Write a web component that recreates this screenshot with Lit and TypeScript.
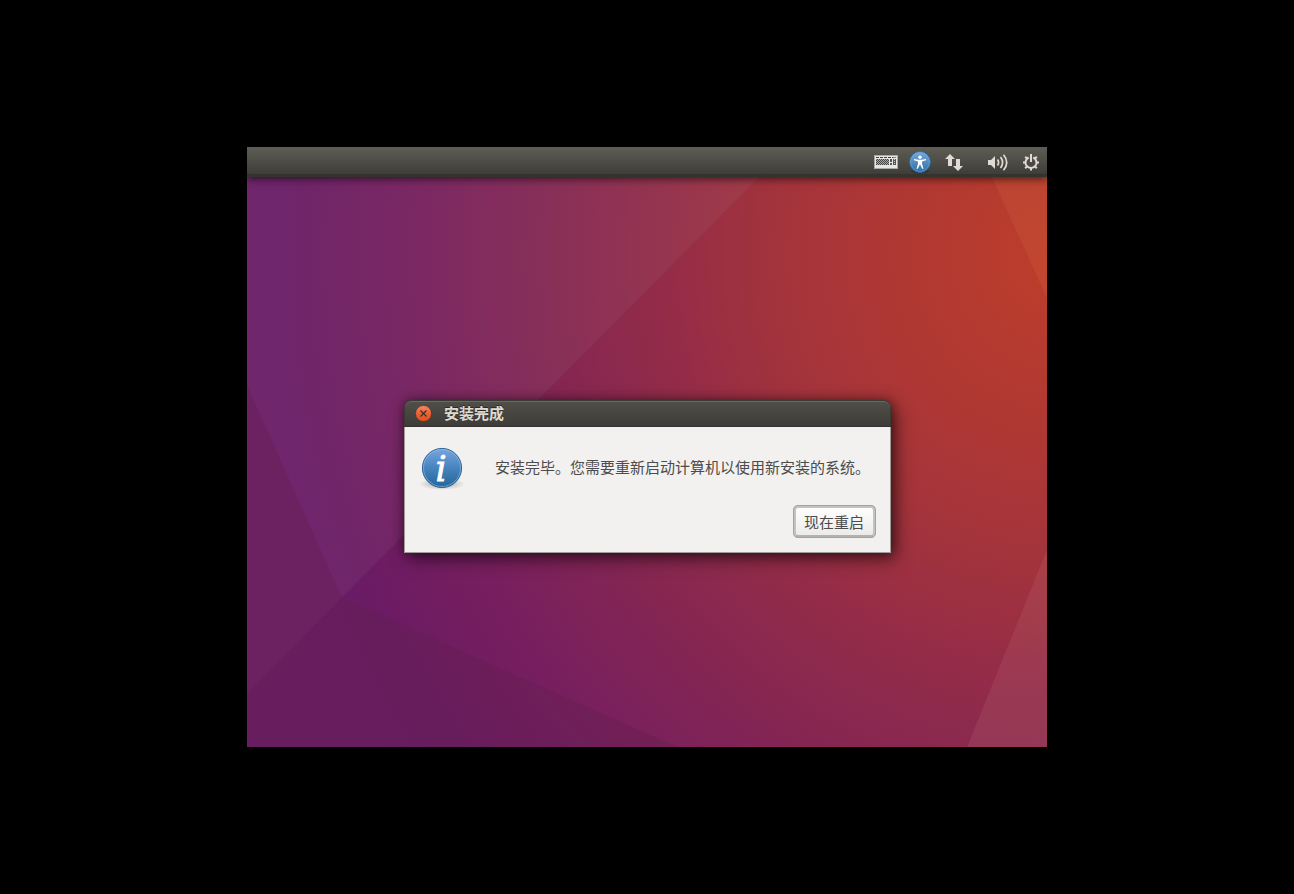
import { LitElement, html, css } from "lit";
import { customElement } from "lit/decorators.js";

const fontStack = css`"Noto Sans CJK SC", "Noto Sans", sans-serif`;

@customElement("desktop-wallpaper")
class DesktopWallpaper extends LitElement {
  static styles = css`
    :host {
      display: block;
    }
    .art {
      display: block;
      width: 100%;
      height: 100%;
    }
  `;

  render() {
    return html`
      <svg class="art" viewBox="0 0 800 600" preserveAspectRatio="none" aria-hidden="true">
        <defs>
          <radialGradient
            id="glow"
            gradientUnits="userSpaceOnUse"
            cx="810"
            cy="100"
            r="810"
            gradientTransform="scale(1 1.080)"
          >
            <stop offset="0" stop-color="#bd3e2a" />
            <stop offset="0.2" stop-color="#b03833" />
            <stop offset="0.36" stop-color="#a2333d" />
            <stop offset="0.46" stop-color="#972d46" />
            <stop offset="0.54" stop-color="#8e2a4c" />
            <stop offset="0.63" stop-color="#852652" />
            <stop offset="0.78" stop-color="#781f5e" />
            <stop offset="0.93" stop-color="#6b1b64" />
            <stop offset="1" stop-color="#6a1c68" />
          </radialGradient>
        </defs>
        <rect width="800" height="600" fill="url(#glow)" />
        <polygon points="0,0 542,0 0,546" fill="#b8a0a0" fill-opacity="0.08" />
        <polygon points="0,238 95,451 0,546" fill="#681c48" fill-opacity="0.3" />
        <polygon points="0,546 95,451 430,600 0,600" fill="#60204c" fill-opacity="0.32" />
        <polygon points="731,0 800,0 800,151" fill="#e08050" fill-opacity="0.14" />
        <polygon points="800,403 800,600 720,600" fill="#d09090" fill-opacity="0.14" />
      </svg>
    `;
  }
}

@customElement("top-panel")
class TopPanel extends LitElement {
  static styles = css`
    :host {
      display: block;
    }
    .bar {
      display: flex;
      align-items: center;
      justify-content: flex-end;
      gap: 10px;
      height: 30px;
      padding: 0 3px 0 8px;
      box-sizing: border-box;
      border-bottom: 3px solid #34342e;
      background: linear-gradient(#5e5d56, #58574f 20%, #3e3d38);
      box-shadow: 0 2px 8px rgba(0, 0, 0, 0.6);
    }
    .indicator {
      display: block;
      padding: 0;
      border: 0;
      background: none;
      color: #dfdbd2;
    }
    .session {
      margin-left: 10px;
    }
    .glyph {
      display: block;
      width: 24px;
      height: 24px;
      margin-top: 3px;
    }
  `;

  render() {
    return html`
      <header class="bar">
        <button class="indicator" aria-label="键盘">
          <svg class="glyph" viewBox="0 0 24 24">
            <defs>
              <pattern id="keys" width="2" height="2" patternUnits="userSpaceOnUse">
                <rect width="2" height="2" fill="#a8a8a4" />
                <rect width="1" height="1" fill="#444" />
                <rect x="1" y="1" width="1" height="1" fill="#444" />
              </pattern>
            </defs>
            <rect x="0.5" y="5.5" width="23" height="13" fill="#e6e6e4" stroke="#a8a8a4" />
            <path d="M2 7.500h20" stroke="#444" stroke-dasharray="3 1" />
            <path d="M19 7.500h3" stroke="#55a83c" />
            <rect x="2" y="9" width="13" height="6" fill="url(#keys)" />
            <path d="M16 9h2v3h-2zM16 13h2v2h-2zM19 9h3v6h-3z" fill="#555" />
            <path d="M20.500 9v6" stroke="#ccc" stroke-dasharray="1 1" />
          </svg>
        </button>
        <button class="indicator" aria-label="辅助功能">
          <svg class="glyph" viewBox="0 0 24 24">
            <defs>
              <linearGradient id="badge" x1="0" y1="0" x2="0" y2="1">
                <stop offset="0" stop-color="#79a9dd" />
                <stop offset="1" stop-color="#2c6ea5" />
              </linearGradient>
            </defs>
            <ellipse cx="12" cy="21" rx="9" ry="2.500" fill="#222" fill-opacity="0.4" />
            <circle cx="12" cy="12" r="10.400" fill="url(#badge)" stroke="#2f6da5" />
            <circle cx="12" cy="12" r="9.400" fill="none" stroke="#8fb8e4" stroke-opacity="0.4" />
            <circle cx="12" cy="7.200" r="1.700" fill="#fff" />
            <path
              d="M6 9l4.500.8h3L18 9v1.200l-4 1.200v2.300l1.500 5h-1.300L12 14.300l-2.200 4.400H8.500l1.500-5v-2.300l-4-1.200z"
              fill="#fff"
            />
          </svg>
        </button>
        <button class="indicator" aria-label="网络">
          <svg class="glyph" viewBox="0 0 24 24" fill="currentColor">
            <path d="M8 4l5 5h-3v7H6V9H3z" />
            <path d="M16 21l-5-5h3V9h4v7h3z" />
          </svg>
        </button>
        <button class="indicator session" aria-label="音量">
          <svg class="glyph" viewBox="0 0 24 24" fill="currentColor">
            <path d="M2 10h3l4-4v13l-4-4H2z" />
            <path
              d="M11.500 9.500q2.200 3 0 6M14.500 7q4.200 5.500 0 11M17.500 4.800q6.500 7.700 0 15.400"
              fill="none"
              stroke="currentColor"
              stroke-width="1.700"
            />
          </svg>
        </button>
        <button class="indicator" aria-label="系统菜单">
          <svg class="glyph" viewBox="0 0 24 24" fill="none" stroke="currentColor">
            <path d="M8.700 7.500a5.500 5.500 0 1 0 4.600 0" stroke-width="2" />
            <path d="M11 4v8" stroke-width="2" />
            <path
              d="M11 18v2.500M3 12.500h2.500M16.500 12.500H19M5.200 6.700l1.900 1.900M16.800 6.700l-1.900 1.900M5.200 18.300l1.900-1.900M16.800 18.300l-1.900-1.900"
              stroke-width="2"
            />
          </svg>
        </button>
      </header>
    `;
  }
}

@customElement("message-dialog")
class MessageDialog extends LitElement {
  static styles = css`
    :host {
      display: block;
      font: 15px/20px ${fontStack};
    }
    .window {
      border-radius: 7px 7px 0 0;
      box-shadow: 4px 5px 18px rgba(0, 0, 0, 0.6), 0 0 10px rgba(0, 0, 0, 0.3);
    }
    .titlebar {
      display: flex;
      align-items: center;
      gap: 12px;
      height: 27px;
      padding: 0 10px 1px;
      box-sizing: border-box;
      border: 1px solid #3a3934;
      border-bottom-color: #33322e;
      border-radius: 7px 7px 0 0;
      background: linear-gradient(#504f49, #3d3c38);
      box-shadow: inset 0 1px #6a6962;
    }
    .title {
      margin: 0;
      color: #dfdbd2;
      font-size: 15px;
      font-weight: 700;
      text-shadow: 0 -1px #2a2926;
    }
    .close {
      padding: 0;
      border: 0;
      background: none;
    }
    .cross {
      display: block;
      width: 17px;
      height: 17px;
    }
    .body {
      display: flex;
      flex-direction: column;
      gap: 13px;
      padding: 17px 14px 14px;
      border: 1px solid #a19d9b;
      border-top: 0;
      background: #f2f1f0;
      color: #4c4c4c;
    }
    .content {
      display: flex;
      align-items: center;
      gap: 28px;
      padding-right: 6px;
    }
    .badge {
      flex: none;
      width: 48px;
      height: 48px;
    }
    .mark {
      font: italic 400 35px "DejaVu Serif", serif;
    }
    .message {
      margin: 0;
      padding-bottom: 2px;
    }
    .actions {
      display: flex;
      justify-content: flex-end;
    }
    .restart {
      height: 33px;
      padding: 0 9px 0 8px;
      border: 3px solid #c3c3c1;
      border-bottom-color: #b2b2af;
      border-radius: 5px;
      outline: 1px solid #a3a3a0;
      outline-offset: -1px;
      background: linear-gradient(#fefefe, #ebebea);
      color: #4c4c4c;
      font: inherit;
    }
  `;

  render() {
    return html`
      <section class="window" role="dialog" aria-labelledby="title" aria-describedby="message">
        <header class="titlebar">
          <button class="close" aria-label="关闭">
            <svg class="cross" viewBox="0 0 17 17">
              <defs>
                <linearGradient id="ember" x1="0" y1="0" x2="0" y2="1">
                  <stop offset="0" stop-color="#f58a63" />
                  <stop offset="0.5" stop-color="#ec6236" />
                  <stop offset="1" stop-color="#e2501c" />
                </linearGradient>
              </defs>
              <circle cx="8.500" cy="8.500" r="8" fill="url(#ember)" stroke="#37322d" stroke-width="0.600" />
              <path d="M5.500 5.500l6 6M11.500 5.500l-6 6" stroke="#3c2a22" stroke-width="1.100" />
            </svg>
          </button>
          <h1 class="title" id="title">安装完成</h1>
        </header>
        <div class="body">
          <div class="content">
            <svg class="badge" viewBox="0 0 48 48" aria-hidden="true">
              <defs>
                <linearGradient id="blue" x1="0" y1="0" x2="0" y2="1">
                  <stop offset="0" stop-color="#7aa5df" />
                  <stop offset="0.5" stop-color="#4584bd" />
                  <stop offset="1" stop-color="#256598" />
                </linearGradient>
                <radialGradient id="ground">
                  <stop offset="0.5" stop-color="#000" stop-opacity="0.16" />
                  <stop offset="1" stop-color="#000" stop-opacity="0" />
                </radialGradient>
              </defs>
              <ellipse cx="23" cy="40" rx="23" ry="6" fill="url(#ground)" />
              <circle cx="23" cy="24" r="19.600" fill="url(#blue)" stroke="#2d669a" />
              <circle cx="23" cy="24" r="18.500" fill="none" stroke="#9cc0ea" stroke-opacity="0.55" />
              <text class="mark" x="22" y="37" text-anchor="middle" fill="#fff" stroke="#fff" stroke-width="0.800">i</text>
            </svg>
            <p class="message" id="message">安装完毕。您需要重新启动计算机以使用新安装的系统。</p>
          </div>
          <div class="actions">
            <button class="restart">现在重启</button>
          </div>
        </div>
      </section>
    `;
  }
}

@customElement("app-root")
class AppRoot extends LitElement {
  static styles = css`
    :host {
      display: grid;
      place-items: center;
      min-height: 100vh;
      background: #000;
    }
    .screen {
      display: grid;
      width: 100%;
      max-width: 800px;
      aspect-ratio: 4 / 3;
      overflow: hidden;
    }
    .wallpaper,
    .desktop {
      grid-area: 1 / 1;
      min-width: 0;
      min-height: 0;
    }
    .desktop {
      display: flex;
      flex-direction: column;
      z-index: 1;
    }
    .workspace {
      flex: 1;
      display: grid;
      place-items: center;
      padding: 29px 0 0 1px;
    }
  `;

  render() {
    return html`
      <main class="screen">
        <desktop-wallpaper class="wallpaper"></desktop-wallpaper>
        <div class="desktop">
          <top-panel></top-panel>
          <div class="workspace">
            <message-dialog></message-dialog>
          </div>
        </div>
      </main>
    `;
  }
}
